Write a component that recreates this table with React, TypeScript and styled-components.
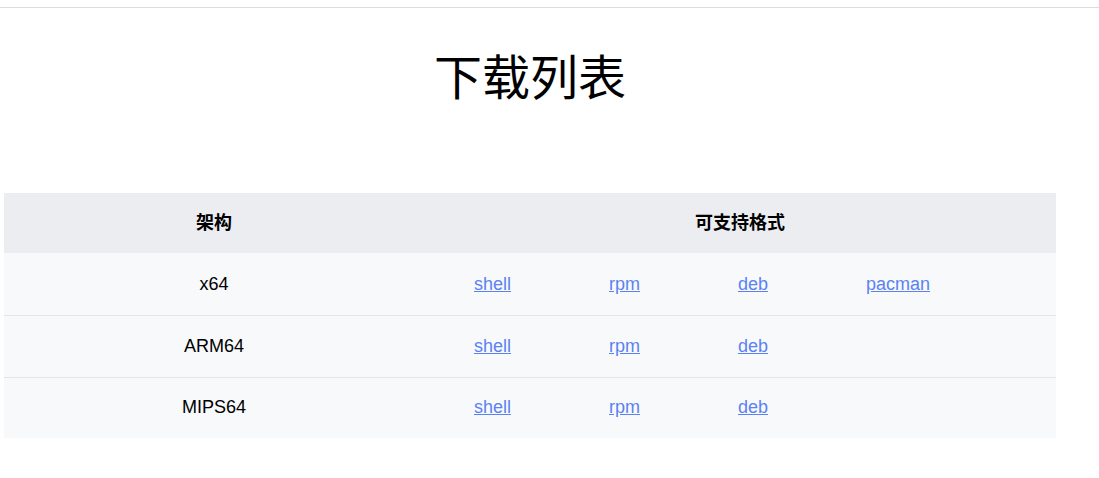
import React from "react";
import styled, { createGlobalStyle } from "styled-components";

const Global = createGlobalStyle`
  html, body { margin: 0; padding: 0; background: #fff; }
  body { font-family: "Liberation Sans", Arial, "Noto Sans CJK SC", sans-serif; color: #000; }
`;

const TopBar = styled.div`
  height: 7px;
  border-bottom: 1px solid #dcdcdc;
`;

const Container = styled.main`
  width: 1052px;
  margin-left: 4px;
`;

const Title = styled.h1`
  margin: 0;
  padding-top: 32px;
  height: 185px;
  box-sizing: border-box;
  text-align: center;
  font-family: "Noto Sans CJK SC", "Liberation Sans", sans-serif;
  font-weight: 400;
  font-size: 48px;
  line-height: 68px;
`;

const Table = styled.table`
  width: 1052px;
  border-collapse: collapse;
  table-layout: fixed;
  font-size: 18px;
`;

const HeadCell = styled.th`
  height: 60px;
  padding: 0 0 5px;
  box-sizing: border-box;
  background: #ecedf0;
  text-align: center;
  font-family: "Noto Sans CJK SC", "Liberation Sans", sans-serif;
  font-weight: 700;
  font-size: 18px;
  line-height: 20px;
`;

const Row = styled.tr<{ $first?: boolean }>`
  background: #f8f9fb;
  border-top: ${(p) => (p.$first ? "none" : "1px solid #e4e5e8")};
`;

const ArchCell = styled.td<{ $first?: boolean }>`
  height: ${(p) => (p.$first ? 62 : 60.5)}px;
  padding: 0;
  text-align: center;
`;

const LinkCell = styled.td`
  padding: 0 0 0 50px;
  text-align: left;
`;

const Link = styled.a`
  color: #5b82f2;
  text-decoration: underline;
`;

const rows = [
  { arch: "x64", formats: ["shell", "rpm", "deb", "pacman"] },
  { arch: "ARM64", formats: ["shell", "rpm", "deb"] },
  { arch: "MIPS64", formats: ["shell", "rpm", "deb"] },
];

export default function App() {
  return (
    <>
      <Global />
      <TopBar />
      <Container>
        <Title>下载列表</Title>
        <Table>
          <colgroup>
            <col style={{ width: 420 }} />
            <col style={{ width: 135 }} />
            <col style={{ width: 129 }} />
            <col style={{ width: 128 }} />
            <col style={{ width: 240 }} />
          </colgroup>
          <thead>
            <tr>
              <HeadCell>架构</HeadCell>
              <HeadCell colSpan={4}>可支持格式</HeadCell>
            </tr>
          </thead>
          <tbody>
            {rows.map((r, i) => (
              <Row key={r.arch} $first={i === 0}>
                <ArchCell $first={i === 0}>{r.arch}</ArchCell>
                {[0, 1, 2, 3].map((j) => (
                  <LinkCell key={j}>
                    {r.formats[j] ? <Link href="#">{r.formats[j]}</Link> : null}
                  </LinkCell>
                ))}
              </Row>
            ))}
          </tbody>
        </Table>
      </Container>
    </>
  );
}
